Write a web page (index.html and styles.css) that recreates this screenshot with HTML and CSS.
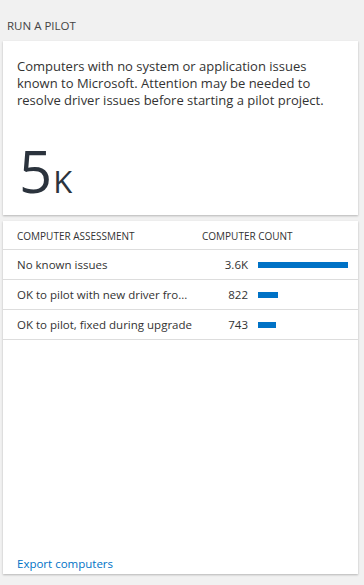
FILE: index.html
```html
<!DOCTYPE html>
<html>
<head>
<meta charset="utf-8">
<link rel="stylesheet" href="styles.css">
</head>
<body>
<div class="page">
  <div class="title">RUN A PILOT</div>
  <div class="card summary">
    <p class="desc">Computers with no system or application issues known to Microsoft. Attention may be needed to resolve driver issues before starting a pilot project.</p>
    <div class="big"><span class="num">5</span><span class="unit">K</span></div>
  </div>
  <div class="card table-card">
    <div class="thead">
      <div class="col-a">COMPUTER ASSESSMENT</div>
      <div class="col-b">COMPUTER COUNT</div>
    </div>
    <div class="row">
      <div class="label">No known issues</div>
      <div class="count">3.6K</div>
      <div class="barcell"><div class="bar" style="width:90px"></div></div>
    </div>
    <div class="row">
      <div class="label">OK to pilot with new driver fro...</div>
      <div class="count">822</div>
      <div class="barcell"><div class="bar" style="width:20px"></div></div>
    </div>
    <div class="row">
      <div class="label">OK to pilot, fixed during upgrade</div>
      <div class="count">743</div>
      <div class="barcell"><div class="bar" style="width:18px"></div></div>
    </div>
    <div class="spacer"></div>
    <a class="export" href="#">Export computers</a>
  </div>
</div>
</body>
</html>
```

FILE: styles.css
```css
* { box-sizing: border-box; }
html, body { margin: 0; padding: 0; }
body {
  background: #f1f1f1;
  font-family: "Open Sans", "Noto Sans", sans-serif;
  color: #333;
  width: 364px;
  height: 585px;
  overflow: hidden;
}
.page {
  padding: 0 6px 0 3px;
  display: flex;
  flex-direction: column;
  height: 585px;
}
.title {
  font-size: 11.5px;
  color: #444;
  padding: 18px 0 0 4px;
  height: 41px;
}
.card {
  background: #fff;
  box-shadow: 0 1px 2px rgba(0,0,0,0.25);
}
.summary {
  height: 174px;
  padding: 17px 14px 0 14px;
  display: flex;
  flex-direction: column;
}
.desc {
  margin: 0;
  font-size: 13px;
  line-height: 17px;
  color: #333;
}
.big {
  margin-top: 33px;
  color: #2b333d;
  display: flex;
  align-items: baseline;
  padding-left: 2px;
}
.num { font-size: 58px; line-height: 58px; font-weight: 400; }
.unit { font-size: 31px; line-height: 31px; margin-left: 1px; }
.table-card {
  margin-top: 6px;
  height: 353px;
  display: flex;
  flex-direction: column;
  margin-bottom: 10px;
}
.thead {
  display: flex;
  height: 29px;
  align-items: center;
  padding: 1px 0 0 14px;
  font-size: 10px;
  color: #333;
  border-bottom: 1px solid #ddd;
}
.col-a { width: 185px; }
.row {
  display: flex;
  align-items: center;
  height: 30px;
  padding-left: 14px;
  border-bottom: 1px solid #ddd;
  font-size: 11.5px;
  color: #333;
}
.label { width: 186px; white-space: nowrap; overflow: hidden; }
.count { width: 45px; text-align: right; }
.barcell { margin-left: 10px; display: flex; align-items: center; }
.bar { height: 6px; background: #0072c6; }
.spacer { flex: 1; }
.export {
  font-size: 11.5px;
  color: #0072c6;
  text-decoration: none;
  padding: 0 0 3px 14px;
}
```
